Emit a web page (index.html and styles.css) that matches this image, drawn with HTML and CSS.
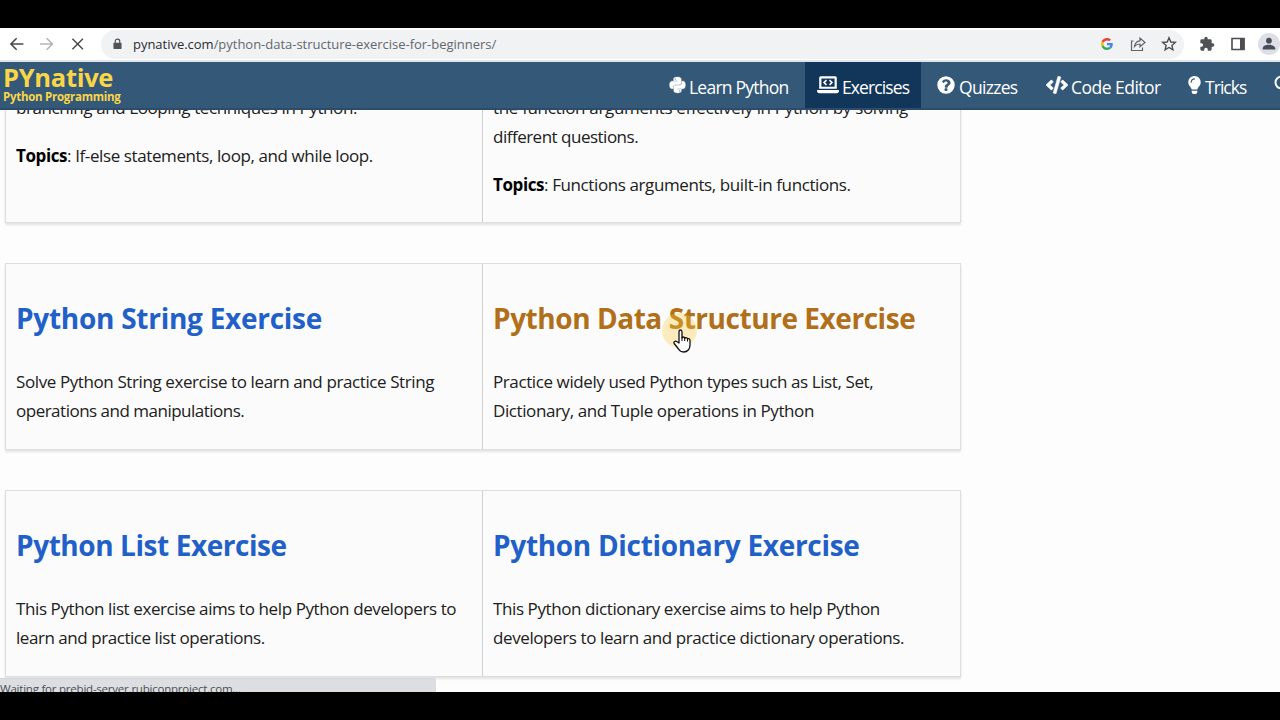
FILE: index.html
```html
<!DOCTYPE html>
<html lang="en">
<head>
<meta charset="utf-8">
<title>Python Exercises</title>
<link rel="stylesheet" href="styles.css">
</head>
<body>
<div class="screen">
  <header class="toolbar">
    <svg class="tool" viewBox="0 0 16 16"><path d="M15 8H2M8 2 2 8l6 6"/></svg>
    <svg class="tool forward" viewBox="0 0 16 16"><path d="M1 8h13M8 2l6 6-6 6"/></svg>
    <svg class="tool stop" viewBox="0 0 16 16"><path d="m2.500 2.500 11 11M13.500 2.500l-11 11"/></svg>
    <div class="address">
      <svg class="lock" viewBox="0 0 10 12"><path d="M1 4.500h8A.8.8 0 0 1 9.500 5.300v5.500A.8.8 0 0 1 8.700 11.600H1.300A.8.8 0 0 1 .5 10.800V5.300Q.5 4.500 1 4.500Z" fill="#505357"/><path d="M2.500 5V3a2.500 2.500 0 0 1 5 0v2" fill="none" stroke="#505357" stroke-width="1.300"/></svg>
      <span class="url"><b>pynative.com</b>/python-data-structure-exercise-for-beginners/</span>
      <svg class="google" viewBox="0 0 48 48"><path fill="#EA4335" d="M24 9.500c3.540 0 6.710 1.220 9.210 3.600l6.850-6.850C35.900 2.380 30.470 0 24 0 14.620 0 6.510 5.380 2.560 13.220l7.980 6.190C12.430 13.720 17.740 9.500 24 9.500z"/><path fill="#4285F4" d="M46.980 24.550c0-1.570-.15-3.090-.38-4.550H24v9.020h12.940c-.58 2.960-2.260 5.480-4.780 7.180l7.730 6c4.510-4.180 7.090-10.360 7.090-17.650z"/><path fill="#FBBC05" d="M10.530 28.590a14.500 14.500 0 0 1 0-9.180l-7.980-6.190a24 24 0 0 0 0 21.560z"/><path fill="#34A853" d="M24 48c6.480 0 11.930-2.130 15.890-5.810l-7.730-6c-2.150 1.450-4.920 2.300-8.160 2.300-6.260 0-11.570-4.220-13.470-9.910l-7.980 6.190C6.510 42.620 14.620 48 24 48z"/></svg>
      <svg class="share" viewBox="0 0 16 16"><path d="M3.500 5H1.500v9.500h11v-3"/><path d="M4.500 10.500C5 7 7 5 10 4.800V2l5 4.500-5 4.300V8Q6.500 8 4.500 10.500Z"/></svg>
      <svg class="star" viewBox="0 0 16 16"><path d="m8 1.800 1.800 4.200 4.500.4-3.400 3 1 4.400L8 11.500l-3.900 2.300 1-4.400-3.400-3 4.500-.4Z"/></svg>
    </div>
    <svg class="puzzle" viewBox="0 0 24 24"><path fill="#505255" d="M20.500 11H19V7a2 2 0 0 0-2-2h-4V3.500a2.500 2.500 0 0 0-5 0V5H4a2 2 0 0 0-2 2v3.800h1.500a2.700 2.700 0 0 1 0 5.400H2V20c0 1.100.9 2 2 2h3.800v-1.500a2.700 2.700 0 0 1 5.400 0V22H17a2 2 0 0 0 2-2v-4h1.500a2.500 2.500 0 0 0 0-5z"/></svg>
    <svg class="panel" viewBox="0 0 14 14"><path d="M1 1.500h12v11H1Z" fill="none" stroke="#4b4d50" stroke-width="1.600"/><path d="M9 1h4.500v12H9Z" fill="#4b4d50"/></svg>
    <svg class="profile" viewBox="0 0 22 22"><circle cx="11" cy="11" r="11" fill="#dcdfe6"/><circle cx="11" cy="7.700" r="2.900" fill="#484c57"/><path d="M4.800 16.500v-1.200c0-4.600 12.400-4.600 12.400 0v1.200Z" fill="#484c57"/></svg>
  </header>

  <nav class="nav">
    <a class="brand"><span class="brand-name">PYnative</span><span class="brand-tag">Python Programming</span></a>
    <div class="links">
      <a class="link learn"><svg viewBox="0 0 448 512"><path stroke="#fff" stroke-width="12" d="M439.800 200.500c-7.700-30.900-22.300-54.200-53.400-54.200h-40.100v47.400c0 36.800-31.200 67.800-66.800 67.800H172.700c-29.200 0-53.400 25-53.400 54.300v101.800c0 29 25.200 46 53.400 54.300 33.800 9.900 66.300 11.700 106.800 0 26.900-7.800 53.400-23.500 53.400-54.300v-40.700H226.200v-13.600h160.200c31.100 0 42.600-21.700 53.400-54.200 11.200-33.500 10.700-65.700 0-108.600zM286.200 404c11.100 0 20.100 9.100 20.100 20.300a20.100 20.100 0 0 1-40.200 0c0-11.200 9.100-20.300 20.100-20.300zM167.800 248.100h106.800c29.700 0 53.400-24.500 53.400-54.300V91.900c0-29-24.400-50.700-53.400-55.600-35.800-5.900-74.700-5.600-106.800.1-45.200 8-53.400 24.700-53.400 55.600v40.700h106.900v13.600h-147c-31.100 0-58.300 18.700-66.800 54.200-9.800 40.700-10.200 66.100 0 108.600 7.600 31.600 25.700 54.200 56.800 54.200H101v-48.800c0-35.300 30.500-66.400 66.800-66.400zm-6.700-142.600a20.200 20.200 0 0 1 0-40.600 20.200 20.200 0 0 1 0 40.600z"/></svg><span>Learn Python</span></a>
      <a class="link exercises"><svg viewBox="0 0 640 512"><path fill-rule="evenodd" d="M112 0h416c26 0 48 22 48 48v320H64V48c0-26 22-48 48-48zm16 64v240h384V64zM16 400h608c9 0 16 7 16 16v16c0 36-29 64-64 64H64c-35 0-64-28-64-64v-16c0-9 7-16 16-16z"/><path d="m275 115-70 69 70 69M365 115l70 69-70 69" fill="none" stroke="#fff" stroke-width="46"/></svg><span>Exercises</span></a>
      <a class="link quizzes"><svg viewBox="0 0 512 512"><path fill-rule="evenodd" d="M504 256a248 248 0 1 1-496 0 248 248 0 0 1 496 0zM262 90c-55 0-90 23-117 64-4 5-3 13 3 17l34 26c6 4 13 3 17-2 18-23 30-36 57-36 20 0 45 13 45 33 0 43-78 42-78 115v13c0 7 5 12 12 12h56c7 0 12-5 12-12v-5c0-44 82-46 82-121 0-58-60-104-123-104zm-6 248a46 46 0 1 0 0 92 46 46 0 0 0 0-92z"/></svg><span>Quizzes</span></a>
      <a class="link editor"><svg viewBox="0 0 640 512"><path stroke="#fff" stroke-width="14" d="m278.900 511.500-61-17.700c-6.400-1.800-10-8.500-8.200-14.900L346.200 8.700c1.800-6.400 8.500-10 14.900-8.200l61 17.700c6.400 1.800 10 8.500 8.200 14.900L293.800 503.300c-1.900 6.400-8.500 10.100-14.900 8.200zm-114-112.200 43.500-46.400c4.600-4.900 4.300-12.700-.8-17.200L117 256l90.600-79.700c5.100-4.500 5.500-12.300.8-17.200l-43.500-46.400c-4.500-4.800-12.100-5.100-17-.5L3.800 247.200c-5.100 4.700-5.100 12.800 0 17.500l144.100 135.100c4.900 4.600 12.500 4.400 17-.5zm327.200.6 144.100-135.100c5.100-4.700 5.100-12.800 0-17.500L492.100 112.100c-4.800-4.500-12.400-4.300-17 .5L431.600 159c-4.600 4.900-4.300 12.700.8 17.200L523 256l-90.600 79.700c-5.100 4.500-5.500 12.300-.8 17.200l43.500 46.400c4.500 4.900 12.100 5.100 17 .6z"/></svg><span>Code Editor</span></a>
      <a class="link tricks"><svg viewBox="0 0 352 512"><path fill-rule="evenodd" d="M96 454c0 6 2 12 5 18l17 25c6 10 16 15 27 15h62c11 0 21-5 27-15l17-25c3-6 5-12 5-18v-38H96zM0 176c0 44 16 85 44 116 16 19 42 58 52 92h160c10-34 36-73 52-92 28-31 44-72 44-116C352 79 273 0 176 0S0 79 0 176zm176-80c-44 0-80 36-80 80a16 16 0 0 1-32 0c0-62 50-112 112-112a16 16 0 0 1 0 32z"/></svg><span>Tricks</span></a>
      <svg class="search" viewBox="0 0 18 18"><circle cx="7.500" cy="7.500" r="6" fill="none" stroke="#fff" stroke-width="2"/><path d="m12 12 5 5" stroke="#fff" stroke-width="2"/></svg>
    </div>
  </nav>

  <main class="content">
    <section class="row first">
      <article class="card">
        <p><span class="snug">branching and Looping techniques in Python.</span></p>
        <p><span class="snug"><b>Topics</b>: If-else statements, loop, and while loop.</span></p>
      </article>
      <article class="card">
        <p><span class="loose">the function arguments effectively in Python by solving</span><span class="tight">different questions.</span></p>
        <p><span class="snug"><b>Topics</b>: Functions arguments, built-in functions.</span></p>
      </article>
    </section>
    <section class="row">
      <article class="card">
        <h2 class="h-string">Python String Exercise</h2>
        <p><span class="snug">Solve Python String exercise to learn and practice String</span><span class="tight">operations and manipulations.</span></p>
      </article>
      <article class="card">
        <h2 class="h-data">Python Data Structure Exercise</h2>
        <p><span class="snug">Practice widely used Python types such as List, Set,</span><span class="snug">Dictionary, and Tuple operations in Python</span></p>
      </article>
    </section>
    <section class="row">
      <article class="card">
        <h2 class="h-list">Python List Exercise</h2>
        <p><span class="snug">This Python list exercise aims to help Python developers to</span><span class="close">learn and practice list operations.</span></p>
      </article>
      <article class="card">
        <h2 class="h-dict">Python Dictionary Exercise</h2>
        <p><span class="snug">This Python dictionary exercise aims to help Python</span><span class="snug">developers to learn and practice dictionary operations.</span></p>
      </article>
    </section>
    <div class="status">Waiting for prebid-server.rubiconproject.com...</div>
  </main>
  <div class="halo"></div>
  <svg class="pointer" viewBox="0 0 18 24"><path d="M6 14V3Q6 1 7.500 1T9 3v6q0-1 1.300-1t1.400 1.500q.2-1 1.500-.8T14.500 10q.3-.7 1.400-.3T17 11.500V16q0 3-1.700 5t-4.800 2Q7.300 23 5.500 20L1.200 14.500q-.7-1.300.4-2t2.400.3Z" fill="#fff" stroke="#111" stroke-width="1.300" stroke-linejoin="round"/><path d="M9 8v4M11.700 9.500V12M14.500 10v2.500" stroke="#111" fill="none"/></svg>
</div>
</body>
</html>
```
FILE: styles.css
```css
* { box-sizing: border-box; }
body { margin: 0; background: #000; font-family: "Open Sans", "Noto Sans", sans-serif; }
.screen { position: relative; width: 1280px; height: 720px; padding: 28px 0; overflow: hidden; display: flex; flex-direction: column; }
.toolbar { height: 34px; flex: none; background: #fff; border-bottom: 2px solid #dfe5eb; display: flex; align-items: center; padding-left: 9px; }
.tool { width: 16px; height: 16px; margin-right: 15px; fill: none; stroke: #47494d; stroke-width: 1.7; }
.forward { stroke: #b3b5b8; }
.stop { margin-right: 16px; stroke-width: 1.5; }
.address { width: 1083px; height: 29px; border-radius: 15px; background: #f0f2f4; display: flex; align-items: center; padding-left: 12px; flex: none; }
.lock { width: 9px; height: 12px; margin-right: 11px; }
.url { font-size: 13px; line-height: 20px; color: #65686c; width: 968px; white-space: nowrap; letter-spacing: -0.02px; margin-top: -1px; }
.url b { font-weight: 400; color: #2c2d30; }
.google { width: 12px; height: 12px; margin-right: 17px; }
.share { width: 16px; height: 16px; margin-right: 15px; fill: none; stroke: #606367; stroke-width: 1.2; }
.star { width: 16px; height: 16px; fill: none; stroke: #4b4d50; stroke-width: 1.4; }
.puzzle { width: 16px; height: 16px; margin: 0 16px 0 15px; flex: none; }
.panel { width: 14px; height: 14px; margin-right: 13px; flex: none; }
.profile { width: 22px; height: 22px; flex: none; }

.nav { height: 48px; flex: none; background: #345878; border-bottom: 2px solid #2c4c6a; display: flex; justify-content: space-between; position: relative; z-index: 1; }
.brand { display: flex; flex-direction: column; padding-left: 3px; color: #f8d648; font-weight: 700; white-space: nowrap; }
.brand-name { font-size: 25.5px; line-height: 31px; letter-spacing: -0.3px; }
.brand-tag { font-size: 11.5px; line-height: 8px; letter-spacing: -0.27px; }
.links { display: flex; flex: none; width: 628px; overflow: hidden; }
.link { display: flex; align-items: center; color: #fff; font-size: 17.5px; white-space: nowrap; flex: none; height: 46px; }
.link svg { fill: #fff; flex: none; }
.link span { padding-top: 3px; }
.learn { width: 153px; padding-left: 17px; letter-spacing: -0.77px; }
.learn svg { width: 17px; height: 18px; margin-right: 3px; }
.exercises { width: 116px; padding-left: 12px; background: #12365a; letter-spacing: -0.9px; }
.exercises svg { width: 22px; height: 18px; margin-right: 3px; }
.quizzes { width: 125px; padding-left: 16px; letter-spacing: -0.7px; }
.quizzes svg { width: 18px; height: 18px; margin-right: 4px; }
.editor { width: 142px; letter-spacing: -0.52px; }
.editor svg { width: 22px; height: 18px; margin-right: 3px; }
.tricks { width: 86px; letter-spacing: -0.95px; }
.tricks svg { width: 13px; height: 18px; margin-right: 4px; }
.search { width: 18px; height: 18px; margin-top: 13px; flex: none; }

.content { flex: 1; min-height: 0; background: #fdfdfd; overflow: hidden; position: relative; padding-left: 5px; }
.row { display: flex; width: 956px; height: 187px; margin-bottom: 40px; border: 1px solid #dedede; box-shadow: 0 2px 2px #e4e4e4; background: #fbfbfb; }
.first { height: 147px; margin-top: -34px; }
.card { width: 476px; padding: 36px 10px 0; flex: none; }
.card + .card { border-left: 1px solid #cfcfcf; width: 478px; }
.first .card { padding-top: 16px; }
h2 { margin: 0; font-size: 28px; line-height: 37px; font-weight: 700; color: #2160c8; white-space: nowrap; letter-spacing: -0.27px; }
.h-data { color: #b06f18; letter-spacing: -0.45px; }
.h-list { letter-spacing: -0.43px; }
.h-dict { letter-spacing: -0.31px; }
p { margin: 30px 0 0; font-size: 17px; line-height: 29px; color: #202020; white-space: nowrap; }
.first p { margin: 0 0 18.5px; }
p span { display: block; width: max-content; }
.snug { letter-spacing: -0.4px; }
.loose { letter-spacing: -0.33px; }
.close { letter-spacing: -0.45px; }
.tight { letter-spacing: -0.5px; }
p b { color: #000; }
.status { position: absolute; left: 0; bottom: 0; width: 436px; height: 14px; background: #dcdee1; border-top: 1px solid #d3d5d8; border-top-right-radius: 3px; font-size: 11.5px; line-height: 20px; color: #4c4e52; overflow: hidden; white-space: nowrap; letter-spacing: -0.22px; }
.halo { position: absolute; left: 662px; top: 313px; width: 35px; height: 35px; border-radius: 50%; background: rgba(255, 205, 60, .32); }
.pointer { position: absolute; left: 673px; top: 329px; width: 18px; height: 24px; }
```
